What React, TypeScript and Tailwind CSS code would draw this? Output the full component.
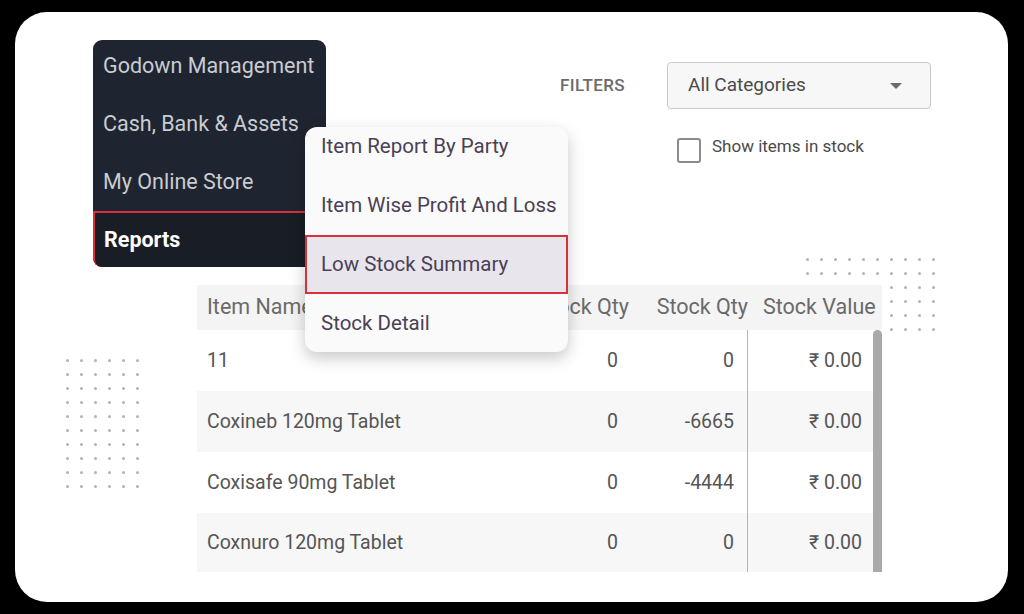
const mainMenu = ["Godown Management", "Cash, Bank & Assets", "My Online Store"];

const subMenu = [
  "Item Report By Party",
  "Item Wise Profit And Loss",
  "Low Stock Summary",
  "Stock Detail",
];

const rows = [
  { name: "11", min: "0", qty: "0", value: "₹ 0.00" },
  { name: "Coxineb 120mg Tablet", min: "0", qty: "-6665", value: "₹ 0.00" },
  { name: "Coxisafe 90mg Tablet", min: "0", qty: "-4444", value: "₹ 0.00" },
  { name: "Coxnuro 120mg Tablet", min: "0", qty: "0", value: "₹ 0.00" },
];

const DotGrid = ({ cols, rowsCount }: { cols: number; rowsCount: number }) => (
  <div
    className="grid gap-x-[11.5px] gap-y-[11.5px]"
    style={{ gridTemplateColumns: `repeat(${cols}, 2.5px)` }}
  >
    {Array.from({ length: cols * rowsCount }).map((_, i) => (
      <span key={i} className="block w-[2.5px] h-[2.5px] rounded-full bg-[#b3b3b3]" />
    ))}
  </div>
);

const App = () => {
  return (
    <div
      className="w-[1024px] h-[614px] bg-black pt-[12px] pl-[15px] pr-[16px] pb-[12px]"
      style={{ fontFamily: "Roboto, 'Liberation Sans', sans-serif" }}
    >
      <div className="relative w-full h-full bg-white rounded-[32px] overflow-hidden pt-[50px]">
        {/* decorative dots */}
        <div className="absolute left-[51px] top-[347px]">
          <DotGrid cols={6} rowsCount={10} />
        </div>
        <div className="absolute left-[791px] top-[246px]">
          <DotGrid cols={10} rowsCount={6} />
        </div>

        {/* filters */}
        <div className="relative flex items-center ml-[545px]">
          <span className="w-[69px] text-[17px] font-medium text-[#6b6b6b] tracking-[0.4px] whitespace-nowrap">
            FILTERS
          </span>
          <div className="ml-[38px] w-[264px] h-[47px] rounded-[4px] border border-[#c9c9c9] bg-[#f7f7f7] flex items-center justify-between pl-[20px] pr-[28px]">
            <span className="text-[19px] text-[#4a4a4a]">All Categories</span>
            <span className="w-0 h-0 border-l-[6px] border-r-[6px] border-t-[6px] border-l-transparent border-r-transparent border-t-[#6b6b6b]" />
          </div>
        </div>
        <div className="relative flex items-center ml-[662px] mt-[29px] gap-[11px]">
          <span className="w-[24px] h-[25px] rounded-[3px] border-2 border-[#8a8a8a] bg-white" />
          <span className="text-[17px] text-[#4a4a4a] -mt-[8px]">Show items in stock</span>
        </div>

        {/* table */}
        <div className="relative ml-[182px] mt-[122px] w-[685px]">
          <div className="grid grid-cols-[323px_110px_118px_134px] h-[45px] items-center bg-[#f4f4f4] text-[21.5px] text-[#6a6a6a] whitespace-nowrap">
            <span className="pl-[10px]">Item Name</span>
            <span className="flex justify-end pr-[1px] overflow-visible">Min Stock Qty</span>
            <span className="text-right">Stock Qty</span>
            <span className="pl-[15px]">Stock Value</span>
          </div>
          <div className="relative">
            {rows.map((r, i) => (
              <div
                key={r.name}
                className={`grid grid-cols-[323px_110px_118px_125px_9px] ${
                  i === 3 ? "h-[59px]" : "h-[61px]"
                } ${i % 2 === 1 ? "bg-[#f7f7f7]" : "bg-white"} text-[19.5px] text-[#555555]`}
              >
                <span className="pl-[10px] self-center">{r.name}</span>
                <span className="text-right pr-[12px] self-center">{r.min}</span>
                <span className="pr-[13px] border-r border-[#b5b5b5] h-full flex items-center justify-end">
                  {r.qty}
                </span>
                <span className="text-right pr-[11px] self-center whitespace-nowrap">{r.value}</span>
                <span className="bg-white" />
              </div>
            ))}
            <div className="absolute right-[0px] top-0 bottom-0 w-[9px] rounded-t-[5px] bg-[#a9a9a9]" />
          </div>
        </div>

        {/* dark side menu */}
        <div className="absolute left-[78px] top-[28px] w-[233px] h-[227px] rounded-[9px] bg-[#1f2530] overflow-hidden">
          <div className="-mt-[3px]">
            {mainMenu.map((m) => (
              <div key={m} className="h-[58px] flex items-center pl-[10px] text-[21.5px] text-[#c9ccd1] whitespace-nowrap">
                {m}
              </div>
            ))}
            <div className="h-[58px] flex items-center pl-[9px] text-[21.5px] font-bold text-white bg-[#191d25] border-2 border-[#d8313c] rounded-b-[9px]">
              Reports
            </div>
          </div>
        </div>

        {/* reports submenu */}
        <div className="absolute left-[290px] top-[115px] w-[263px] h-[225px] rounded-[12px] bg-[#fafafa] overflow-hidden shadow-[0_6px_16px_rgba(0,0,0,0.22)]">
          <div className="-mt-[10px]">
            {subMenu.map((s, i) => (
              <div
                key={s}
                className={`h-[59px] flex items-center text-[20.5px] text-[#4b4055] whitespace-nowrap ${
                  i === 2 ? "bg-[#e8e6ec] border-2 border-[#d8313c] pl-[14px]" : "pl-[16px]"
                }`}
              >
                {s}
              </div>
            ))}
          </div>
        </div>
      </div>
    </div>
  );
};

export default App;
